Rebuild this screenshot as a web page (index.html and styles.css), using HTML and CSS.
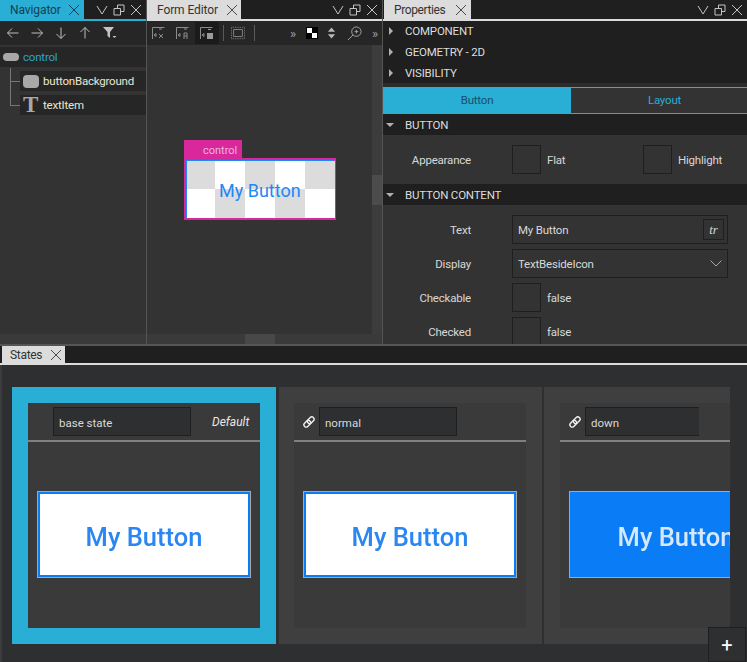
FILE: index.html
```html
<!DOCTYPE html>
<html lang="en">
  <head>
    <meta charset="UTF-8" />
    <title>Qt Design Studio</title>
    <link rel="stylesheet" href="styles.css">
  </head>
  <body>
    <div class="top">
      <!-- Navigator -->
      <section class="panel">
        <div class="tabbar tabbar-nav">
          <div class="tab tab-blue"><span>Navigator</span><svg class="ico-close" viewBox="0 0 12 12"><path d="M1 1l10 10M11 1L1 11"/></svg></div>
          <div class="win-btns">
            <svg viewBox="0 0 12 12"><path d="M1 2l5 8 5-8"/></svg>
            <svg viewBox="0 0 12 12"><path d="M1 4.500h6.500V11H1zM4.500 4V1H11v6.500H8"/></svg>
            <svg viewBox="0 0 12 12"><path d="M1 1l10 10M11 1L1 11"/></svg>
          </div>
        </div>
        <div class="toolbar nav-tools">
          <svg viewBox="0 0 12 12"><path d="M11.500 6H.5M5 1.500L.5 6 5 10.500"/></svg>
          <svg viewBox="0 0 12 12"><path d="M.5 6h11M7 1.500L11.500 6 7 10.500"/></svg>
          <svg viewBox="0 0 12 12"><path d="M6 .5v11M1.500 7L6 11.500 10.500 7"/></svg>
          <svg viewBox="0 0 12 12"><path d="M6 11.500V.5M1.500 5L6 .5 10.500 5"/></svg>
          <svg class="filter" viewBox="0 0 14 12"><path d="M0 0h11L7 5v6L4.500 9V5z"/><path d="M9.500 9h4l-2 2z"/></svg>
        </div>
        <div class="tree">
          <div class="tree-row root"><span class="pill"></span>control</div>
          <div class="tree-row child">
            <span class="branch"></span>
            <div class="node"><span class="rounded"></span>buttonBackground</div>
          </div>
          <div class="tree-row child">
            <span class="branch long"></span>
            <div class="node"><span class="t-icon">T</span>textItem</div>
          </div>
        </div>
        <div class="hscroll"></div>
      </section>

      <!-- Form Editor -->
      <section class="panel">
        <div class="tabbar">
          <div class="tab tab-form"><span>Form Editor</span><svg class="ico-close" viewBox="0 0 12 12"><path d="M1 1l10 10M11 1L1 11"/></svg></div>
          <div class="win-btns">
            <svg viewBox="0 0 12 12"><path d="M1 2l5 8 5-8"/></svg>
            <svg viewBox="0 0 12 12"><path d="M1 4.500h6.500V11H1zM4.500 4V1H11v6.500H8"/></svg>
            <svg viewBox="0 0 12 12"><path d="M1 1l10 10M11 1L1 11"/></svg>
          </div>
        </div>
        <div class="toolbar form-tools">
          <span class="tool"><svg viewBox="0 0 14 14"><path d="M.5 13V1.500h12M4 7.500l-2 1.500 2 1.500zM7 8l4 4M11 8l-4 4M7 3h3"/></svg></span>
          <span class="tool"><svg viewBox="0 0 14 14"><path d="M.5 13V1.500h12M4 7.500l-2 1.500 2 1.500zM8 13V7h3v6M8 10h3M8 3h3"/></svg></span>
          <span class="tool active"><svg viewBox="0 0 14 14"><path d="M.5 13V1.500h12M4 7.500l-2 1.500 2 1.500z"/><path class="solid" d="M7 7h6v6H7zM8 3h3v1H8z"/></svg></span>
          <i class="sep"></i>
          <span class="tool"><svg viewBox="0 0 16 14"><path d="M3 3h10v8H3z"/><path class="dots" d="M.5.5h15v13H.5z"/></svg></span>
          <i class="sep"></i>
          <span class="more first">»</span>
          <span class="bw"><i></i><i></i></span>
          <svg class="updown" viewBox="0 0 10 12"><path d="M5 0l4 4.500H1zM5 12L1 7.500h8z"/></svg>
          <svg class="zoom" viewBox="0 0 16 16"><circle cx="10" cy="6" r="5"/><path d="M6.500 9.500L1 15M8 6h4M10 4v4"/></svg>
          <span class="more">»</span>
        </div>
        <div class="canvas-wrap">
          <div class="canvas">
            <div class="item-label">control</div>
            <div class="item-box">
              <div class="checker">
                <i></i><i class="w"></i><i></i><i class="w"></i><i></i>
                <i class="w"></i><i></i><i class="w"></i><i></i><i class="w"></i>
              </div>
              <span class="item-text">My Button</span>
            </div>
          </div>
          <div class="vscroll"><div class="vhandle"></div></div>
        </div>
        <div class="hscroll"><div class="hhandle"></div></div>
      </section>

      <!-- Properties -->
      <section class="panel props">
        <div class="tabbar">
          <div class="tab tab-props"><span>Properties</span><svg class="ico-close" viewBox="0 0 12 12"><path d="M1 1l10 10M11 1L1 11"/></svg></div>
          <div class="win-btns">
            <svg viewBox="0 0 12 12"><path d="M1 2l5 8 5-8"/></svg>
            <svg viewBox="0 0 12 12"><path d="M1 4.500h6.500V11H1zM4.500 4V1H11v6.500H8"/></svg>
            <svg viewBox="0 0 12 12"><path d="M1 1l10 10M11 1L1 11"/></svg>
          </div>
        </div>
        <div class="collapsed">
          <div class="sec-row"><i class="arrow-r"></i>COMPONENT</div>
          <div class="sec-row"><i class="arrow-r"></i>GEOMETRY - 2D</div>
          <div class="sec-row"><i class="arrow-r"></i>VISIBILITY</div>
        </div>
        <div class="prop-tabs">
          <div class="prop-tab on">Button</div>
          <div class="prop-tab off">Layout</div>
        </div>
        <div class="sec-head"><i class="arrow-d"></i>BUTTON</div>
        <div class="form form-a">
          <div class="prop-row">
            <label>Appearance</label>
            <span class="check"></span><span class="check-text flat">Flat</span>
            <span class="check"></span><span class="check-text">Highlight</span>
          </div>
        </div>
        <div class="sec-head"><i class="arrow-d"></i>BUTTON CONTENT</div>
        <div class="form form-b">
          <div class="prop-row">
            <label>Text</label>
            <div class="field">My Button<span class="tr">tr</span></div>
          </div>
          <div class="prop-row">
            <label>Display</label>
            <div class="field">TextBesideIcon<svg class="chev" viewBox="0 0 12 7"><path d="M.5.5L6 6l5.500-5.500"/></svg></div>
          </div>
          <div class="prop-row">
            <label>Checkable</label>
            <span class="check"></span><span class="check-text">false</span>
          </div>
          <div class="prop-row">
            <label>Checked</label>
            <span class="check"></span><span class="check-text">false</span>
          </div>
        </div>
      </section>
    </div>

    <!-- States -->
    <section class="states">
      <div class="states-tabbar">
        <div class="tab tab-states"><span>States</span><svg class="ico-close" viewBox="0 0 12 12"><path d="M1 1l10 10M11 1L1 11"/></svg></div>
      </div>
      <div class="state-strip">
        <div class="state-card base">
          <div class="state-inner">
            <div class="state-head">
              <div class="state-name base-name">base state</div>
              <em>Default</em>
            </div>
            <div class="state-body">
              <div class="preview"><span>My Button</span></div>
            </div>
          </div>
        </div>
        <div class="state-card">
          <div class="state-inner">
            <div class="state-head">
              <svg class="link" viewBox="0 0 12 12"><rect x="4" y="2" width="7.500" height="4.500" rx="2.200" transform="rotate(-45 7.750 4.250)"/><rect x=".5" y="5.500" width="7.500" height="4.500" rx="2.200" transform="rotate(-45 4.250 7.750)"/></svg>
              <div class="state-name">normal</div>
            </div>
            <div class="state-body">
              <div class="preview"><span>My Button</span></div>
            </div>
          </div>
        </div>
        <div class="state-card last">
          <div class="state-inner">
            <div class="state-head">
              <svg class="link" viewBox="0 0 12 12"><rect x="4" y="2" width="7.500" height="4.500" rx="2.200" transform="rotate(-45 7.750 4.250)"/><rect x=".5" y="5.500" width="7.500" height="4.500" rx="2.200" transform="rotate(-45 4.250 7.750)"/></svg>
              <div class="state-name short">down</div>
            </div>
            <div class="state-body">
              <div class="preview down"><span>My Button</span></div>
            </div>
          </div>
        </div>
      </div>
      <button class="add-state">+</button>
    </section>
  </body>
</html>
```

FILE: styles.css
```css
html,
body {
  margin: 0;
  height: 100%;
}
body {
  width: 747px;
  height: 662px;
  overflow: hidden;
  background-color: #2e2f31;
  color: #e0e0e0;
  font-family: Roboto, "Noto Sans", sans-serif;
  font-size: 11.5px;
  letter-spacing: -0.2px;
}
svg {
  fill: none;
  stroke: currentColor;
  stroke-width: 1;
  display: block;
}

/* top row of docks */
.top {
  display: grid;
  grid-template-columns: 147px 236px 1fr;
  height: 346px;
  background-color: #555555;
}
.panel {
  display: flex;
  flex-direction: column;
  height: 344px;
  margin-right: 1px;
  overflow: hidden;
  background-color: #333333;
}
.props {
  margin-right: 0;
}

/* tabs */
.tabbar {
  display: flex;
  justify-content: space-between;
  flex: none;
  height: 19px;
  border-bottom: 2px solid #dcdcdc;
  background-color: #1f1f1f;
}
.tabbar-nav {
  border-bottom-color: #29aed6;
}
.tab {
  display: flex;
  align-items: center;
  justify-content: space-between;
  width: 94px;
  padding: 0 4px 0 10px;
  box-sizing: border-box;
  background-color: #dcdcdc;
  color: #333333;
  font-size: 12px;
  letter-spacing: -0.1px;
}
.tab-blue {
  width: 84px;
  background-color: #29aed6;
  color: #143f50;
}
.tab-form {
  padding-right: 3px;
}
.tab-props {
  width: 87px;
  margin-left: 1px;
  letter-spacing: -0.4px;
}
.tab-states {
  width: 63px;
  height: 17px;
  margin-left: 2px;
  padding: 0 3px 0 8px;
  letter-spacing: -0.3px;
}
.ico-close {
  width: 12px;
  height: 12px;
  stroke: #4a4a4a;
}
.tab-blue .ico-close {
  stroke: #143f50;
}
.win-btns {
  display: flex;
  align-items: center;
  gap: 5px;
  padding-right: 4px;
  color: #c4c4c4;
}
.win-btns svg {
  width: 12px;
  height: 12px;
}

/* toolbars */
.toolbar {
  display: flex;
  align-items: center;
  flex: none;
  height: 24px;
  background-color: #262626;
}
.nav-tools {
  gap: 12px;
  padding-left: 7px;
  color: #bdbdbd;
}
.nav-tools svg {
  width: 12px;
  height: 12px;
}
.nav-tools .filter {
  width: 14px;
  fill: #c4c4c4;
  stroke: none;
}
.form-tools {
  color: #8c8c8c;
}
.tool {
  display: flex;
  align-items: center;
  justify-content: center;
  width: 24px;
  height: 22px;
}
.tool svg {
  width: 14px;
  height: 14px;
}
.tool .solid {
  fill: #9a9a9a;
  stroke: none;
}
.tool .dots {
  stroke-dasharray: 1 1;
}
.tool.active {
  background-color: #1b1b1b;
}
.sep {
  width: 1px;
  height: 16px;
  margin: 0 2px 0 4px;
  background-color: #5a5a5a;
}
.more {
  color: #a0a0a0;
  font-size: 13px;
  line-height: 1;
}
.more.first {
  margin-left: 33px;
}
.bw {
  display: grid;
  grid-template-columns: 5px 5px;
  grid-template-rows: 5px 5px;
  margin-left: 10px;
  padding: 1px;
  background-color: #000000;
}
.bw i {
  width: 5px;
  height: 5px;
  background-color: #ffffff;
}
.bw i:last-child {
  grid-column: 2;
  grid-row: 2;
}
.updown {
  width: 9px;
  height: 12px;
  margin-left: 9px;
  fill: #b8b8b8;
  stroke: none;
}
.zoom {
  width: 15px;
  height: 15px;
  margin-left: 11px;
  color: #a8a8a8;
}
.form-tools .more:last-child {
  margin-left: 10px;
}

/* navigator tree */
.tree {
  flex: 1;
  padding-top: 2px;
}
.tree-row {
  display: flex;
  height: 20px;
  margin-bottom: 4px;
  color: #ece6d0;
}
.root {
  align-items: center;
  background-color: #262626;
  color: #29a3cc;
}
.pill {
  width: 16px;
  height: 8px;
  margin: 0 4px 0 3px;
  border-radius: 4px;
  background-color: #a8a8a8;
}
.child {
  padding-left: 10px;
}
.branch {
  flex: none;
  width: 9px;
  height: 13px;
  margin-top: -3px;
  border-left: 1px solid #777777;
  border-bottom: 1px solid #777777;
}
.branch.long {
  height: 24px;
  margin-top: -14px;
}
.node {
  display: flex;
  align-items: center;
  flex: 1;
  background-color: #262626;
}
.rounded {
  width: 16px;
  height: 13px;
  margin: 0 4px 0 3px;
  border-radius: 4px;
  background-color: #a8a8a8;
}
.t-icon {
  width: 17px;
  margin: 0 4px 0 2px;
  color: #a8a8a8;
  font-family: "Liberation Serif", serif;
  font-size: 23px;
  font-weight: 700;
  line-height: 20px;
  text-align: center;
}
.hscroll {
  flex: none;
  height: 10px;
  background-color: #3a3a3a;
}
.hhandle {
  width: 30px;
  height: 10px;
  margin-left: 98px;
  background-color: #484848;
}

/* form editor canvas */
.canvas-wrap {
  display: flex;
  flex: 1;
  min-height: 0;
}
.canvas {
  flex: 1;
  padding: 95px 0 0 37px;
}
.item-label {
  width: 58px;
  height: 18px;
  box-sizing: border-box;
  padding: 4px 0 0 19px;
  background-color: #d8289c;
  color: #efb3dc;
  font-size: 11px;
  letter-spacing: 0;
  line-height: 14px;
}
.item-box {
  position: relative;
  width: 152px;
  height: 62px;
  box-sizing: border-box;
  border: 2px solid #d8289c;
  background-color: #ffffff;
}
.checker {
  display: grid;
  grid-template-columns: 28px 30px 30px 30px 30px;
  grid-template-rows: 28px 29px;
  box-sizing: border-box;
  height: 58px;
  border: 1px solid #1e88f5;
}
.checker i {
  background-color: #dcdcdc;
}
.checker i.w {
  background-color: #ffffff;
}
.item-text {
  position: absolute;
  top: 19px;
  left: 33px;
  color: #1e88f5;
  font-size: 18px;
  letter-spacing: 0;
  line-height: 24px;
  white-space: nowrap;
}
.vscroll {
  flex: none;
  width: 10px;
  background-color: #3c3c3c;
}
.vhandle {
  height: 30px;
  margin-top: 130px;
  background-color: #4c4c4c;
}

/* properties */
.collapsed {
  flex: none;
  height: 66px;
  background: linear-gradient(#1f1f1f 62px, #2c2c2c 62px);
}
.sec-row {
  display: flex;
  align-items: center;
  height: 21px;
  padding-bottom: 1px;
  box-sizing: border-box;
  color: #dddddd;
}
.arrow-r {
  width: 0;
  height: 0;
  margin: 0 12px 0 6px;
  border-left: 4px solid #b0b0b0;
  border-top: 4px solid transparent;
  border-bottom: 4px solid transparent;
}
.arrow-d {
  width: 0;
  height: 0;
  margin: 0 11px 0 3px;
  border-top: 4px solid #b0b0b0;
  border-left: 4px solid transparent;
  border-right: 4px solid transparent;
}
.prop-tabs {
  display: grid;
  grid-template-columns: 188px 1fr;
  flex: none;
  height: 27px;
  text-align: center;
}
.prop-tab {
  box-sizing: border-box;
  border-top: 1px solid #29aed6;
  border-bottom: 1px solid #29aed6;
  color: #29aed6;
  line-height: 25px;
}
.prop-tab.off {
  padding-left: 11px;
}
.prop-tab.on {
  background-color: #29aed6;
  color: #17506a;
}
.sec-head {
  display: flex;
  align-items: center;
  flex: none;
  height: 21px;
  background-color: #1f1f1f;
  color: #dddddd;
}
.form-a {
  flex: none;
  height: 49px;
  padding-top: 10px;
  box-sizing: border-box;
}
.form-b {
  padding-top: 10px;
}
.prop-row {
  display: flex;
  align-items: center;
  height: 29px;
  margin-bottom: 5px;
}
.prop-row label {
  flex: none;
  width: 88px;
  margin-right: 41px;
  color: #d8d8d8;
  text-align: right;
}
.check {
  flex: none;
  width: 29px;
  height: 29px;
  box-sizing: border-box;
  border: 1px solid #1f1f1f;
}
.check-text {
  margin-left: 6px;
  color: #d8d8d8;
}
.check-text.flat {
  width: 96px;
}
.field {
  display: flex;
  align-items: center;
  justify-content: space-between;
  width: 216px;
  height: 29px;
  box-sizing: border-box;
  padding: 0 3px 0 5px;
  border: 1px solid #1f1f1f;
  color: #d8d8d8;
}
.tr {
  width: 21px;
  height: 21px;
  box-sizing: border-box;
  border: 1px solid #1f1f1f;
  font-family: "Liberation Serif", serif;
  font-size: 13px;
  font-style: italic;
  line-height: 19px;
  text-align: center;
}
.chev {
  width: 12px;
  height: 7px;
  margin-right: 2px;
  color: #a8a8a8;
}

/* states */
.states {
  position: relative;
  height: 316px;
  box-shadow: inset 2px 0 #3c3c3c;
}
.states-tabbar {
  height: 17px;
  border-bottom: 2px solid #dcdcdc;
  background-color: #1f1f1f;
}
.state-strip {
  display: flex;
  gap: 3px;
  width: 718px;
  height: 257px;
  margin-top: 22px;
  margin-left: 12px;
  overflow: hidden;
}
.state-card {
  flex: none;
  width: 232px;
  height: 225px;
  padding: 16px 16px 16px 15px;
  background-color: #3f3f3f;
}
.state-card.base {
  padding-left: 16px;
  background-color: #29aed6;
}
.state-card.last {
  margin-left: -1px;
  padding: 16px 0 16px 16px;
}
.state-inner {
  height: 225px;
  background-color: #3a3a3a;
}
.state-head {
  display: flex;
  align-items: center;
  box-sizing: border-box;
  padding: 4px 0 4px 9px;
  border-bottom: 2px solid #808080;
  height: 39px;
}
.state-name {
  width: 138px;
  height: 29px;
  box-sizing: border-box;
  padding-left: 5px;
  border: 1px solid #1f1f1f;
  background-color: #2e2f31;
  color: #d8d8d8;
  letter-spacing: 0;
  line-height: 30px;
}
.base-name {
  margin-left: 16px;
}
.state-name.short {
  width: 114px;
  border-right: 0;
}
.state-head em {
  margin-left: 21px;
  color: #e8e8e8;
  font-size: 12px;
  letter-spacing: 0;
}
.link {
  flex: none;
  width: 12px;
  height: 12px;
  margin-right: 4px;
  color: #f0f0f0;
  stroke-width: 1.400;
}
.state-body {
  padding: 49px 0 0 9px;
}
.preview {
  display: flex;
  align-items: center;
  justify-content: center;
  width: 214px;
  height: 87px;
  box-sizing: border-box;
  border: 3px solid #0a7cf5;
  outline: 1px solid #a8a8a8;
  outline-offset: -1px;
  background-color: #ffffff;
  color: #2a86f0;
  font-size: 25.5px;
  font-weight: 500;
  letter-spacing: 0;
}
.preview span {
  padding-top: 5px;
  filter: blur(0.4px);
}
.preview.down {
  border: 1px solid #a8a8a8;
  background-color: #0a7cf5;
  color: #d6e8fc;
  outline: 0;
}
.add-state {
  position: absolute;
  top: 281px;
  left: 708px;
  width: 38px;
  height: 35px;
  padding: 0;
  border: 1px solid #1f1f1f;
  background-color: #2e2f31;
  color: #ffffff;
  font-family: Roboto, sans-serif;
  font-size: 20px;
}
```
